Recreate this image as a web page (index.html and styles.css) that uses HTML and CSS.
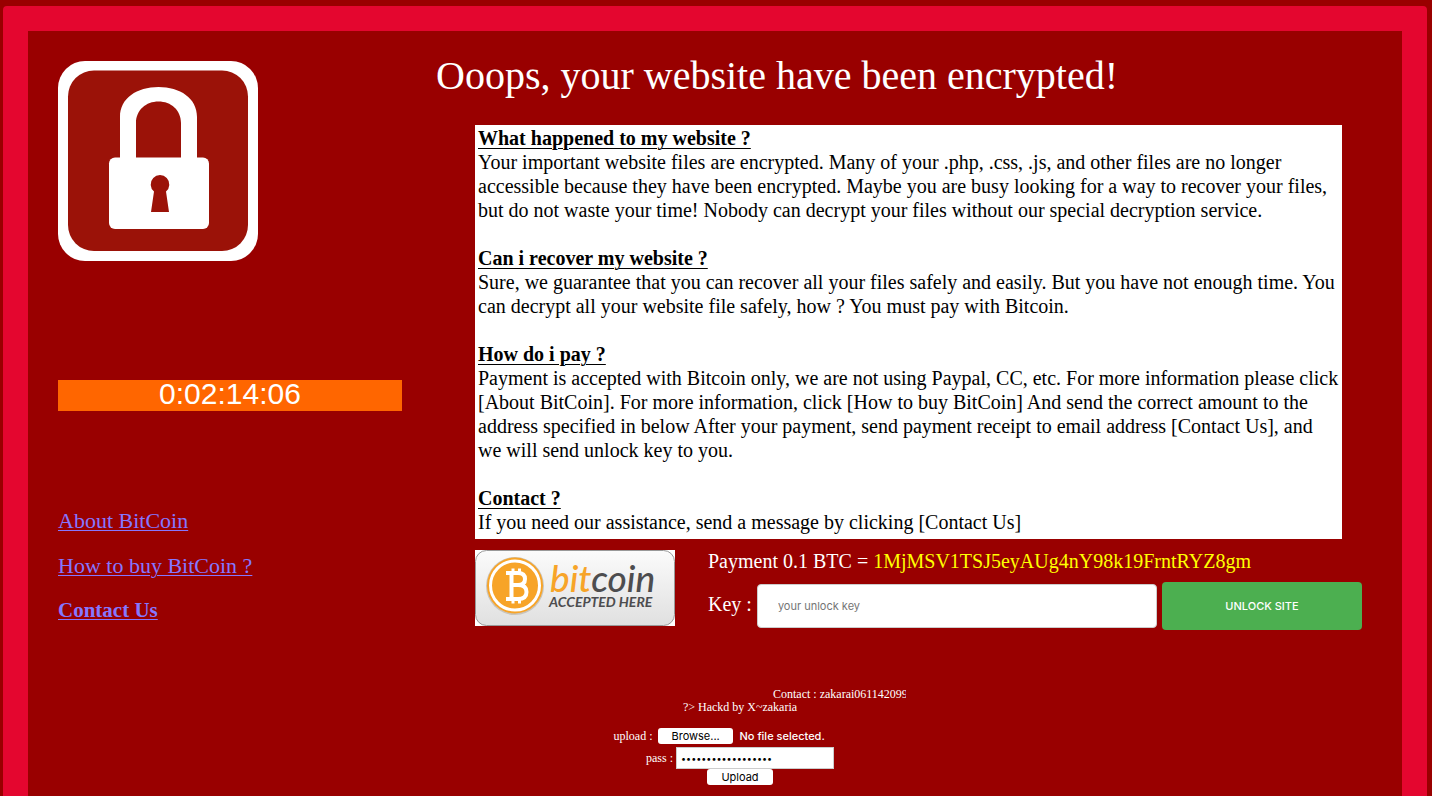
FILE: index.html
```
<!DOCTYPE html>
<html lang="en">
<head>
<meta charset="utf-8">
<title>Ooops, your website have been encrypted!</title>
<link rel="stylesheet" href="styles.css">
</head>
<body>
<div class="frame">
  <div class="columns">
    <aside class="side">
      <svg class="lock" viewBox="0 0 200 200" aria-hidden="true">
        <rect width="200" height="200" rx="27" fill="#fff"/>
        <rect x="10" y="9.500" width="180" height="180.500" rx="26" fill="#9b1208"/>
        <path d="M62 98V56C62 37 79 26 100.500 26S139 37 139 56v42h-16V62c0-13-10-21.500-22.500-21.500S78 49 78 62v36z" fill="#fff"/>
        <rect x="51" y="96.500" width="100" height="71.500" rx="6" fill="#fff"/>
        <path d="M96 130.500a9.300 9.300 0 1 1 12 0l3 20.500H93z" fill="#9b1208"/>
      </svg>
      <div class="timer">0:02:14:06</div>
      <nav class="links">
        <a href="#about">About BitCoin</a>
        <a href="#buy">How to buy BitCoin ?</a>
        <a href="#contact" class="strong">Contact Us</a>
      </nav>
    </aside>
    <main class="main">
      <h1 class="title">Ooops, your website have been encrypted!</h1>
      <div class="note">
        <h2>What happened to my website ?</h2>
        <p>Your important website files are encrypted. Many of your .php, .css, .js, and other files are no longer accessible because they have been encrypted. Maybe you are busy looking for a way to recover your files, but do not waste your time! Nobody can decrypt your files without our special decryption service.</p>
        <h2>Can i recover my website ?</h2>
        <p>Sure, we guarantee that you can recover all your files safely and easily. But you have not enough time. You can decrypt all your website file safely, how ? You must pay with Bitcoin.</p>
        <h2>How do i pay ?</h2>
        <p>Payment is accepted with Bitcoin only, we are not using Paypal, CC, etc. For more information please click [About BitCoin]. For more information, click [How to buy BitCoin] And send the correct amount to the address specified in below After your payment, send payment receipt to email address [Contact Us], and we will send unlock key to you.</p>
        <h2>Contact ?</h2>
        <p>If you need our assistance, send a message by clicking [Contact Us]</p>
      </div>
      <div class="payment">
        <svg class="badge" viewBox="0 0 200 76" role="img" aria-label="bitcoin accepted here">
          <defs>
            <linearGradient id="plate" x1="0" y1="0" x2="0" y2="1">
              <stop offset="0" stop-color="#fbfbfb"/>
              <stop offset="1" stop-color="#e0e0e0"/>
            </linearGradient>
          </defs>
          <rect width="200" height="76" fill="#fff"/>
          <rect x="0.500" y="0.500" width="199" height="75" rx="11" fill="url(#plate)" stroke="#999"/>
          <circle cx="40" cy="36" r="29" fill="#c9c4bb"/>
          <circle cx="40" cy="35.500" r="28" fill="#f7a428"/>
          <circle cx="40" cy="35.500" r="24.500" fill="#f7a428" stroke="#fff" stroke-width="3"/>
          <g fill="none" stroke="#fff" stroke-width="4">
            <path d="M31 23h12q7 0 7 6t-7 6h-6M43 35q8.500 0 8.500 7t-8.500 7H31M36.500 23v26"/>
            <path d="M38 18.500v4M44.500 18.500v4M38 49.500v4M44.500 49.500v4" stroke-width="3"/>
          </g>
          <text class="badge-name" x="75" y="42"><tspan fill="#f7a428">bit</tspan><tspan fill="#4d4d4f">coin</tspan></text>
          <text class="badge-sub" x="74" y="57" fill="#4d4d4f">ACCEPTED HERE</text>
        </svg>
        <form class="unlock">
          <p class="amount">Payment 0.1 BTC = <span class="address">1MjMSV1TSJ5eyAUg4nY98k19FrntRYZ8gm</span></p>
          <div class="key-row">
            <label for="key">Key :</label>
            <input class="key" id="key" type="text" placeholder="your unlock key">
            <button class="unlock-btn" type="button">UNLOCK SITE</button>
          </div>
        </form>
      </div>
    </main>
  </div>
  <footer class="footer">
    <div class="ticker">Contact : zakarai0611420990</div>
    <div class="credit">?&gt; Hackd by X~zakaria</div>
    <form class="upload">
      <div class="upload-row file-row">
        <span>upload :</span>
        <input class="file" id="file" type="file">
        <label class="small-btn browse" for="file">Browse...</label>
        <span class="file-name">No file selected.</span>
      </div>
      <div class="upload-row">
        <label for="pass">pass :</label>
        <input class="pass" id="pass" type="password" value="aaaaaaaaaaaaaaaaaa">
      </div>
      <button class="small-btn" type="button">Upload</button>
    </form>
  </footer>
</div>
</body>
</html>
```
FILE: styles.css
```
* {
  box-sizing: border-box;
}

body {
  margin: 0;
  background: #990000;
  color: #fff;
  font-family: "Liberation Serif", serif;
  font-size: 20px;
  line-height: 24px;
  overflow: hidden;
}

h1, h2, p {
  margin: 0;
}

.frame {
  margin: 6px 5px 0 3px;
  padding: 30px;
  min-height: 100vh;
  border: 25px solid #e4062f;
  border-radius: 4px;
}

.columns {
  display: grid;
  grid-template-columns: 344px 1fr;
  column-gap: 34px;
}

.lock {
  display: block;
  width: 200px;
  height: 200px;
}

.timer {
  margin-top: 119px;
  padding-bottom: 3px;
  background: #ff6600;
  font-family: "Liberation Sans", sans-serif;
  font-size: 30px;
  line-height: 28px;
  text-align: center;
}

.links {
  display: flex;
  flex-direction: column;
  align-items: flex-start;
  margin-top: 87px;
}

.links a {
  color: #8577ff;
  font-size: 22px;
  line-height: 45px;
  text-decoration-thickness: 1px;
  text-underline-offset: 2px;
}

.links .strong {
  font-size: 21px;
  font-weight: bold;
}

.title {
  font-size: 40px;
  font-weight: normal;
  line-height: 30px;
}

.note {
  margin: 34px 30px 0 39px;
  padding: 1px 3px 5px;
  background: #fff;
  color: #000;
}

.note h2 {
  font-size: 20px;
  line-height: 24px;
  text-decoration: underline;
  text-decoration-thickness: 1px;
  text-underline-offset: 3px;
}

.note p + h2 {
  margin-top: 24px;
}

.payment {
  display: flex;
  gap: 33px;
  margin: 11px 0 0 39px;
}

.badge {
  flex: none;
  width: 200px;
  height: 76px;
}

.badge-name {
  font: italic 500 37px Lato, sans-serif;
}

.badge-sub {
  font: italic bold 14px Lato, sans-serif;
}

.unlock {
  flex: 1;
}

.amount {
  line-height: 22px;
}

.address {
  color: #ffff00;
}

.key-row {
  display: flex;
  align-items: center;
  gap: 5px;
  margin-top: 10px;
}

.key-row label {
  flex: none;
  padding-bottom: 4px;
}

.key {
  flex: 1;
  min-width: 0;
  height: 44px;
  padding: 0 20px;
  border: 1px solid #ccc;
  border-radius: 4px;
  background: #fff;
  font: 11px Inter, sans-serif;
}

.key::placeholder {
  color: #757575;
}

.unlock-btn {
  flex: none;
  width: 200px;
  height: 48px;
  margin-right: 10px;
  border: 0;
  border-radius: 4px;
  background: #4caf50;
  color: #fff;
  font: 500 11px Inter, sans-serif;
}

.footer {
  display: flex;
  flex-direction: column;
  align-items: center;
  margin-top: 55px;
  padding-left: 50px;
  font-size: 12px;
  line-height: 13px;
}

.ticker {
  width: 332px;
  padding-left: 199px;
  overflow: hidden;
  white-space: nowrap;
}

.upload {
  display: flex;
  flex-direction: column;
  align-items: center;
  margin-top: 14px;
}

.upload-row {
  display: flex;
  align-items: center;
  gap: 3px;
}

.file-row {
  width: 253px;
  margin-bottom: 3px;
  gap: 5px;
}

.file {
  position: absolute;
  width: 1px;
  height: 1px;
  opacity: 0;
}

.small-btn {
  height: 16px;
  padding: 0 14px;
  border: 0;
  border-radius: 3px;
  background: #fff;
  color: #000;
  font: 11px/16px Inter, sans-serif;
}

.browse {
  width: 75px;
}

.file-name {
  padding-left: 2px;
  font: 500 11px Inter, sans-serif;
}

.pass {
  width: 158px;
  height: 22px;
  padding: 0 4px;
  border: 1px solid #ccc;
  background: #fff;
  color: #000;
  font: 9px Inter, sans-serif;
}
```
